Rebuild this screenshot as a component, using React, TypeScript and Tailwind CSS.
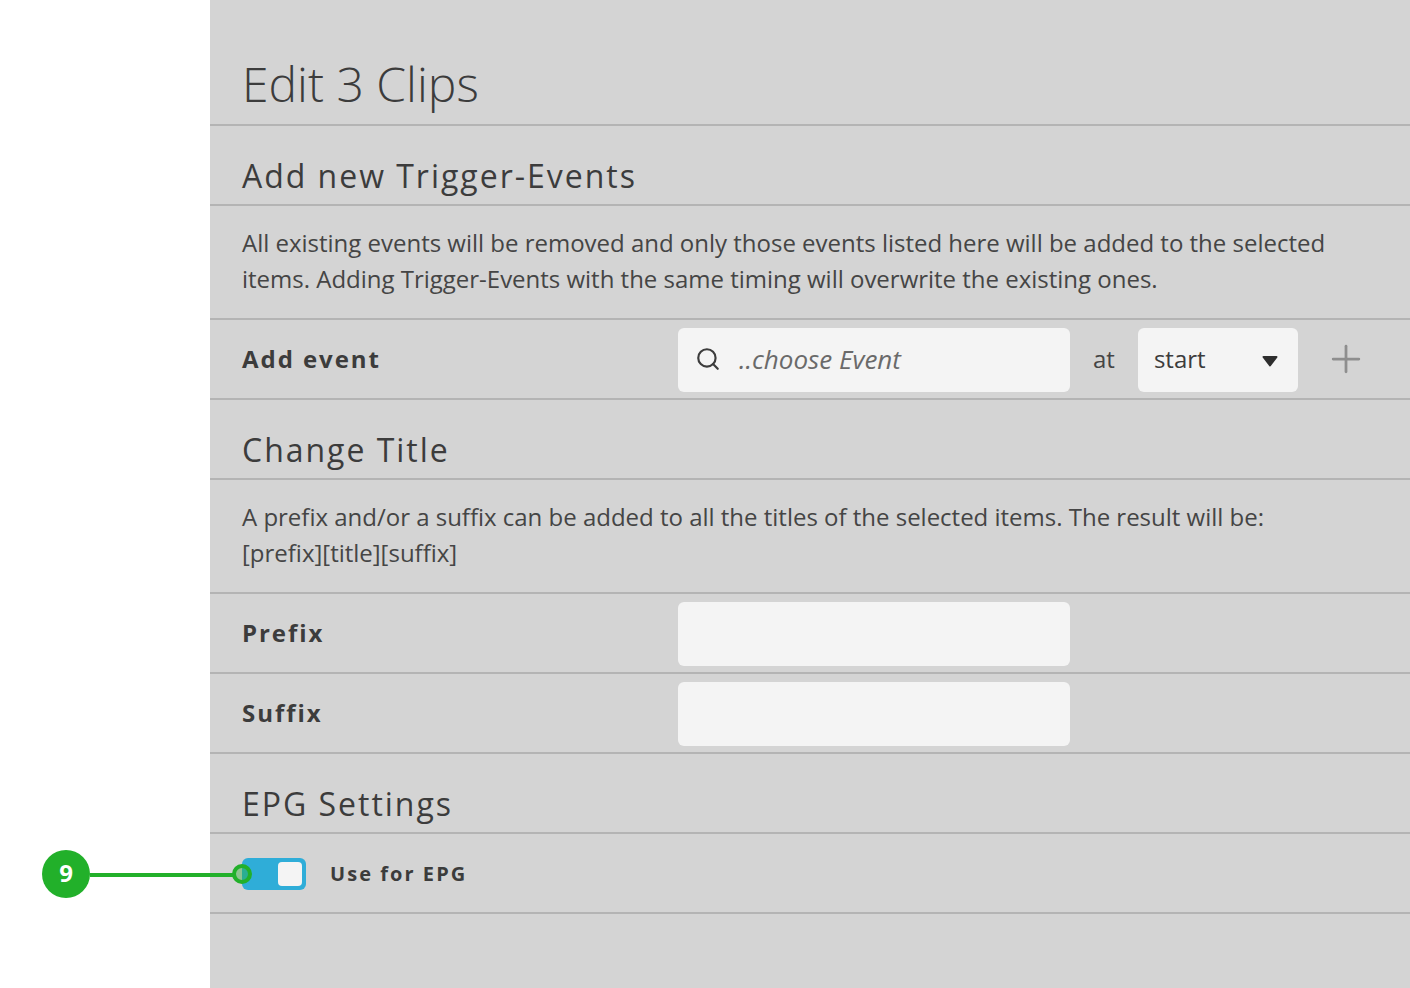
import { Search, Plus } from "lucide-react"

function SectionTitle({ children }: { children: string }) {
  return (
    <div className="h-[80px] border-b-2 border-[#b4b4b4] pl-[32px] pt-[28px] text-[32px] leading-[44px] font-normal tracking-[1.98px] text-[#3c3c3c]">
      {children}
    </div>
  )
}

function Description({ lines }: { lines: string[] }) {
  return (
    <div className="h-[114px] border-b-2 border-[#b4b4b4] pl-[32px] pt-[19px] text-[24px] leading-[36px] tracking-[-0.01px] text-[#454545]">
      {lines.map((line) => (
        <div key={line} className="whitespace-nowrap">{line}</div>
      ))}
    </div>
  )
}

function FieldRow({ label }: { label: string }) {
  return (
    <div className="flex h-[80px] items-center border-b-2 border-[#b4b4b4] pl-[32px]">
      <div className="w-[436px] text-[24px] font-bold tracking-[1.95px] text-[#3c3c3c]">{label}</div>
      <div className="mt-[2px] h-[64px] w-[392px] rounded-[6px] bg-[#f4f4f4]" />
    </div>
  )
}

export default function App() {
  return (
    <div className="relative flex h-[988px] w-[1410px] overflow-hidden bg-white font-['Open_Sans',sans-serif]">
      <div className="w-[210px] shrink-0" />
      <div className="flex-1 bg-[#d4d4d4]">
        <div className="h-[126px] border-b-2 border-[#b4b4b4] pl-[32px] pt-[52px] text-[48px] leading-[64px] font-light text-[#3c3c3c]">
          Edit 3 Clips
        </div>
        <SectionTitle>Add new Trigger-Events</SectionTitle>
        <Description
          lines={[
            "All existing events will be removed and only those events listed here will be added to the selected",
            "items. Adding Trigger-Events with the same timing will overwrite the existing ones.",
          ]}
        />
        <div className="flex h-[80px] items-center border-b-2 border-[#b4b4b4] pl-[32px]">
          <div className="w-[436px] text-[24px] font-bold tracking-[1.95px] text-[#3c3c3c]">Add event</div>
          <div className="mt-[2px] flex h-[64px] w-[392px] items-center rounded-[6px] bg-[#f4f4f4] pl-[17px]">
            <Search className="mb-[2px] h-[26px] w-[26px] text-[#3c3c3c]" strokeWidth={2} />
            <span className="ml-[18px] mb-[2px] text-[26px] italic text-[#6a6a6a]">..choose Event</span>
          </div>
          <span className="ml-[23px] text-[24px] text-[#454545]">at</span>
          <div className="ml-[23px] mt-[2px] flex h-[64px] w-[160px] items-center justify-between rounded-[6px] bg-[#f4f4f4] pl-[16px] pr-[19px]">
            <span className="mb-[2px] text-[24px] text-[#3c3c3c]">start</span>
            <svg width="18" height="12" viewBox="0 0 18 12" className="mt-[2px]">
              <path d="M2.5 2h13L9 10.5z" fill="#2e2e2e" strokeLinejoin="round" stroke="#2e2e2e" strokeWidth="2" />
            </svg>
          </div>
          <Plus className="ml-[26px] h-[44px] w-[44px] text-[#8e8e8e]" strokeWidth={1.5} />
        </div>
        <SectionTitle>Change Title</SectionTitle>
        <Description
          lines={[
            "A prefix and/or a suffix can be added to all the titles of the selected items. The result will be:",
            "[prefix][title][suffix]",
          ]}
        />
        <FieldRow label="Prefix" />
        <FieldRow label="Suffix" />
        <SectionTitle>EPG Settings</SectionTitle>
        <div className="flex h-[80px] items-center border-b-2 border-[#b4b4b4] pl-[32px]">
          <div className="mt-[2px] flex h-[32px] w-[64px] items-center justify-end rounded-[6px] bg-[#2fadd8] pr-[4px]">
            <div className="h-[24px] w-[24px] rounded-[4px] bg-[#f4f4f4]" />
          </div>
          <span className="ml-[24px] mt-[2px] text-[20px] font-bold tracking-[2.05px] text-[#3c3c3c]">Use for EPG</span>
        </div>
      </div>

      {/* callout marker over the toggle */}
      <div className="absolute left-[42px] top-[850px] flex h-[48px] w-[48px] items-center justify-center rounded-full bg-[#22b02a] pb-[2px] text-[24px] font-bold text-white">
        9
      </div>
      <div className="absolute left-[90px] top-[873px] h-[4px] w-[143px] bg-[#22b02a]" />
      <div className="absolute left-[232px] top-[864px] h-[20px] w-[20px] rounded-full border-[4px] border-[#22b02a] bg-[#22b02a]/40" />
    </div>
  )
}
